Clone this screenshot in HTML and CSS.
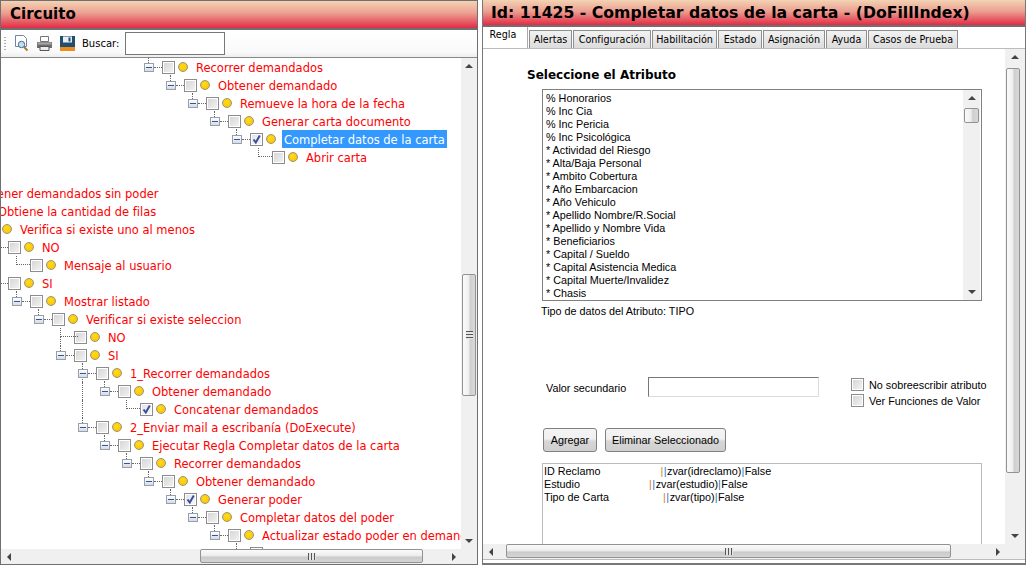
FILE: index.html
```html
<!DOCTYPE html>
<html lang="es">
<head>
<meta charset="utf-8">
<title>Circuito</title>
<link rel="stylesheet" href="styles.css">
</head>
<body>
<div class="app">
  <section class="panel left">
    <h1 class="title">Circuito</h1>
    <div class="toolbar">
      <span class="grip"></span>
      <svg class="tool first" width="17" height="17" viewBox="0 0 17 17"><path d="M2.5 .5h8l3 3v8h-11z" fill="#fff" stroke="#6d86a8"/><circle cx="8.5" cy="9.5" r="3.2" fill="#bfe0f5" stroke="#46688c"/><path d="M11 12l3.5 3.5" stroke="#a87a2c" stroke-width="2"/></svg>
      <svg class="tool" width="17" height="17" viewBox="0 0 17 17"><path d="M4.5 1.5h8v5h-8z" fill="#fff" stroke="#777"/><path d="M1 7h15v6H1z" fill="#6f6f6f"/><path d="M1.5 7.5h14v2h-14z" fill="#a8a8a8"/><path d="M4 11.5h9v4H4z" fill="#eee" stroke="#555"/></svg>
      <svg class="tool" width="17" height="17" viewBox="0 0 17 17"><path d="M1 1h15v15H1z" fill="#1f4e6e"/><path d="M4 1.5h9v6H4z" fill="#e8eef2"/><path d="M9.5 2.5h2v4h-2z" fill="#1f4e6e"/><path d="M1 12h15v4H1z" fill="#ef8a1d"/></svg>
      <label class="search-label">Buscar:</label>
      <input class="search" type="text">
    </div>
    <div class="scroller tree-scroller">
      <div class="tree">
        <div class="row" style="--l:8"><i class="exp stub"></i><i class="dots"></i><i class="cb"></i><i class="bullet"></i><span class="node">Recorrer demandados</span></div>
        <div class="row" style="--l:9"><i class="exp stub"></i><i class="dots"></i><i class="cb"></i><i class="bullet"></i><span class="node">Obtener demandado</span></div>
        <div class="row" style="--l:10"><i class="exp stub"></i><i class="dots"></i><i class="cb"></i><i class="bullet"></i><span class="node">Remueve la hora de la fecha</span></div>
        <div class="row" style="--l:11"><i class="exp stub"></i><i class="dots"></i><i class="cb"></i><i class="bullet"></i><span class="node">Generar carta documento</span></div>
        <div class="row" style="--l:12"><i class="exp stub"></i><i class="dots"></i><i class="cb on"><svg viewBox="0 0 11 11" width="11" height="11"><path d="M2.5 5.5l2.3 3L8.8 1.5" fill="none" stroke="#3c4f96" stroke-width="2"/></svg></i><i class="bullet"></i><span class="node sel">Completar datos de la carta</span></div>
        <div class="row" style="--l:13"><i class="leaf"></i><i class="dots none"></i><i class="cb"></i><i class="bullet"></i><span class="node">Abrir carta</span></div>
        <div class="row"></div>
        <div class="row" style="--l:-2"><i class="exp stub"></i><i class="dots"></i><i class="cb"></i><i class="bullet"></i><span class="node">Obtener demandados sin poder</span></div>
        <div class="row" style="--l:-1"><i class="exp stub"></i><i class="dots"></i><i class="cb"></i><i class="bullet"></i><span class="node">Obtiene la cantidad de filas</span></div>
        <div class="row" style="--l:0"><i class="exp stub"></i><i class="dots"></i><i class="cb"></i><i class="bullet"></i><span class="node">Verifica si existe uno al menos</span></div>
        <div class="row" style="--l:1"><i class="exp stub"></i><i class="dots"></i><i class="cb"></i><i class="bullet"></i><span class="node">NO</span></div>
        <div class="row" style="--l:2"><i class="leaf"></i><i class="dots none"></i><i class="cb"></i><i class="bullet"></i><span class="node">Mensaje al usuario</span></div>
        <div class="row" style="--l:1"><i class="exp stub"></i><i class="dots"></i><i class="cb"></i><i class="bullet"></i><span class="node">SI</span></div>
        <div class="row" style="--l:2"><i class="exp stub"></i><i class="dots"></i><i class="cb"></i><i class="bullet"></i><span class="node">Mostrar listado</span></div>
        <div class="row" style="--l:3"><i class="exp stub"></i><i class="dots"></i><i class="cb"></i><i class="bullet"></i><span class="node">Verificar si existe seleccion</span></div>
        <div class="row" style="--l:4"><i class="leaf cont"></i><i class="dots none"></i><i class="cb"></i><i class="bullet"></i><span class="node">NO</span></div>
        <div class="row" style="--l:4"><i class="exp stub"></i><i class="dots"></i><i class="cb"></i><i class="bullet"></i><span class="node">SI</span></div>
        <div class="row" style="--l:5"><i class="guide low" style="--g:5"></i><i class="exp stub"></i><i class="dots"></i><i class="cb"></i><i class="bullet"></i><span class="node">1_Recorrer demandados</span></div>
        <div class="row" style="--l:6"><i class="guide" style="--g:5"></i><i class="exp stub"></i><i class="dots"></i><i class="cb"></i><i class="bullet"></i><span class="node">Obtener demandado</span></div>
        <div class="row" style="--l:7"><i class="guide" style="--g:5"></i><i class="leaf"></i><i class="dots none"></i><i class="cb on"><svg viewBox="0 0 11 11" width="11" height="11"><path d="M2.5 5.5l2.3 3L8.8 1.5" fill="none" stroke="#3c4f96" stroke-width="2"/></svg></i><i class="bullet"></i><span class="node">Concatenar demandados</span></div>
        <div class="row" style="--l:5"><i class="exp stub"></i><i class="dots"></i><i class="cb"></i><i class="bullet"></i><span class="node">2_Enviar mail a escribanía (DoExecute)</span></div>
        <div class="row" style="--l:6"><i class="exp stub"></i><i class="dots"></i><i class="cb"></i><i class="bullet"></i><span class="node">Ejecutar Regla Completar datos de la carta</span></div>
        <div class="row" style="--l:7"><i class="exp stub"></i><i class="dots"></i><i class="cb"></i><i class="bullet"></i><span class="node">Recorrer demandados</span></div>
        <div class="row" style="--l:8"><i class="exp stub"></i><i class="dots"></i><i class="cb"></i><i class="bullet"></i><span class="node">Obtener demandado</span></div>
        <div class="row" style="--l:9"><i class="exp stub"></i><i class="dots"></i><i class="cb on"><svg viewBox="0 0 11 11" width="11" height="11"><path d="M2.5 5.5l2.3 3L8.8 1.5" fill="none" stroke="#3c4f96" stroke-width="2"/></svg></i><i class="bullet"></i><span class="node">Generar poder</span></div>
        <div class="row" style="--l:10"><i class="exp stub"></i><i class="dots"></i><i class="cb"></i><i class="bullet"></i><span class="node">Completar datos del poder</span></div>
        <div class="row" style="--l:11"><i class="exp stub"></i><i class="dots"></i><i class="cb"></i><i class="bullet"></i><span class="node">Actualizar estado poder en demandados</span></div>
        <div class="row" style="--l:12"><i class="exp stub"></i><i class="dots"></i><i class="cb"></i></div>
      </div>
      <div class="vbar">
        <span class="arrow up"></span>
        <div class="track tree-v"><span class="thumb v"><b></b></span></div>
        <span class="arrow down"></span>
      </div>
      <div class="hbar">
        <span class="arrow lft"></span>
        <div class="track tree-h"><span class="thumb h"><b></b></span></div>
        <span class="arrow rgt"></span>
      </div>
      <div class="corner"></div>
    </div>
  </section>

  <section class="panel right">
    <h1 class="title id">Id: 11425 - Completar datos de la carta - (DoFillIndex)</h1>
    <nav class="tabs">
      <a class="tab active">Regla</a>
      <a class="tab">Alertas</a>
      <a class="tab">Configuración</a>
      <a class="tab">Habilitación</a>
      <a class="tab">Estado</a>
      <a class="tab">Asignación</a>
      <a class="tab">Ayuda</a>
      <a class="tab">Casos de Prueba</a>
    </nav>
    <div class="scroller page-scroller">
      <div class="page">
        <h2 class="heading">Seleccione el Atributo</h2>
        <div class="listbox">
          <ul class="items">
            <li>% Honorarios</li>
            <li>% Inc Cia</li>
            <li>% Inc Pericia</li>
            <li>% Inc Psicológica</li>
            <li>* Actividad del Riesgo</li>
            <li>* Alta/Baja Personal</li>
            <li>* Ambito Cobertura</li>
            <li>* Año Embarcacion</li>
            <li>* Año Vehiculo</li>
            <li>* Apellido Nombre/R.Social</li>
            <li>* Apellido y Nombre Vida</li>
            <li>* Beneficiarios</li>
            <li>* Capital / Sueldo</li>
            <li>* Capital Asistencia Medica</li>
            <li>* Capital Muerte/Invalidez</li>
            <li>* Chasis</li>
          </ul>
          <div class="vbar list-bar">
            <span class="arrow up"></span>
            <div class="track list-v"><span class="thumb list-thumb"></span></div>
            <span class="arrow down"></span>
          </div>
        </div>
        <p class="type">Tipo de datos del Atributo: TIPO</p>
        <div class="value-row">
          <label class="value-label">Valor secundario</label>
          <input class="value-input" type="text">
          <div class="options">
            <label class="option"><i class="cb plain"></i>No sobreescribir atributo</label>
            <label class="option"><i class="cb plain"></i>Ver Funciones de Valor</label>
          </div>
        </div>
        <div class="actions">
          <button class="btn add">Agregar</button>
          <button class="btn del">Eliminar Seleccionado</button>
        </div>
        <div class="results">
          <div class="line">ID Reclamo                    <em class="o">|</em><em>|</em>zvar(idreclamo)<em>|</em>False</div>
          <div class="line">Estudio                       <em class="o">|</em><em>|</em>zvar(estudio)<em>|</em>False</div>
          <div class="line">Tipo de Carta                  <em class="o">|</em><em>|</em>zvar(tipo)<em>|</em>False</div>
        </div>
      </div>
      <div class="vbar">
        <span class="arrow up"></span>
        <div class="track page-v"><span class="thumb v"></span></div>
        <span class="arrow down"></span>
      </div>
      <div class="hbar">
        <span class="arrow lft"></span>
        <div class="track page-h"><span class="thumb h"><b></b></span></div>
        <span class="arrow rgt"></span>
      </div>
      <div class="corner"></div>
    </div>
  </section>
</div>
</body>
</html>
```

FILE: styles.css
```css
* { box-sizing: border-box; }
html, body { margin: 0; height: 100%; overflow: hidden; background: #fff; }
body { font-family: "Liberation Sans", Arial, sans-serif; font-size: 10.8px; color: #000; }
.app { display: flex; justify-content: space-between; width: 1026px; height: 565px; }

.panel { display: flex; flex-direction: column; background: #fff; border: 1px solid #6f6f6f; min-width: 0; }
.left { width: 478px; }
.right { width: 544px; border-width: 0 1px 2px 1px; border-color: #777; padding-bottom: 3px; }

.title {
  margin: 0; height: 29px; padding-left: 9px; flex: none;
  font: bold 15px/27px "DejaVu Sans", Verdana, sans-serif; color: #000;
  background: linear-gradient(#f3d3b4 0%, #ec9f90 45%, #e22b45 100%);
  border-bottom: 2px solid #6f6f6f;
}
.title.id { height: 27px; padding-left: 8px; line-height: 25px; font-size: 15.7px; }

.toolbar {
  flex: none; display: flex; align-items: center; height: 28px;
  background: linear-gradient(#fff 0%, #fafafa 80%, #eee 100%);
  border-bottom: 1px solid #888;
}
.grip { width: 2px; height: 14px; margin-left: 3px; background: repeating-linear-gradient(#aaa 0 1px, transparent 1px 3px); }
.tool { margin-left: 6px; }
.tool.first { margin-left: 7px; }
.search-label { margin-left: 6px; font-family: "DejaVu Sans", sans-serif; font-size: 10px; }
.search { width: 100px; height: 23px; margin-left: 6px; border: 1px solid #777; background: #fff; padding: 0; outline: 0; }

.scroller { flex: 1; min-height: 0; display: grid; grid-template-rows: 1fr auto; }
.tree-scroller { grid-template-columns: 460px 16px; }
.page-scroller { grid-template-columns: 522px 20px; border: 1px solid #bbb; border-width: 1px 0 1px 0; }

.tree { overflow: hidden; font: 11.5px/20px "DejaVu Sans", Verdana, sans-serif; color: #f00; min-width: 0; min-height: 0; }
.row {
  --l: 0;
  position: relative; display: flex; align-items: center; height: 18px;
  margin-left: calc(var(--l) * 22px - 33px); white-space: nowrap;
}
.row i { flex: none; display: block; }
.exp {
  position: relative; width: 10px; height: 9px; margin-top: 1px;
  border: 1px solid #97a0aa; background: linear-gradient(#fff, #d6dbe2);
}
.exp::after { content: ""; position: absolute; left: 1px; right: 1px; top: 3px; height: 1px; background: #2f55a8; }
.exp.stub::before { content: ""; position: absolute; left: 3px; top: -7px; height: 6px; border-left: 1px dotted #666; }
.row .guide {
  position: absolute; top: 0; height: 18px; border-left: 1px dotted #666;
  left: calc((var(--g) - var(--l)) * 22px + 4px);
}
.row .guide.low { top: 13px; height: 5px; }
.dots { width: 8px; height: 1px; border-top: 1px dotted #666; }
.dots.none { width: 0; border: 0; }
.leaf { width: 18px; height: 9px; margin-top: -9px; border-left: 1px dotted #666; border-bottom: 1px dotted #666; margin-left: 4px; margin-right: -4px; }
.leaf.cont { position: relative; }
.leaf.cont::after { content: ""; position: absolute; left: -1px; top: 9px; height: 9px; border-left: 1px dotted #666; }
.cb {
  display: block; flex: none; width: 13px; height: 13px; border: 1px solid #8c8c8c;
  background: linear-gradient(135deg, #d4d4d4, #f4f4f4); box-shadow: inset 0 0 0 1px #fff;
}
.cb.on { background: linear-gradient(135deg, #dfe3ee, #f8f8fb); }
.cb svg { display: block; }
.bullet {
  width: 10px; height: 10px; margin: 0 8px 0 3px; border-radius: 50%;
  background: radial-gradient(circle at 45% 40%, #ffdc1e, #ffc600 70%); border: 1px solid #97947c;
}
.node { display: block; height: 18px; }
.node.sel { background: #3399ff; color: #fff; margin-left: -2px; padding: 0 2px; }

.track { flex: 1; min-width: 0; min-height: 0; display: flex; }
.vbar { display: flex; flex-direction: column; background: #f0f0f0; min-height: 0; }
.hbar { display: flex; background: #f0f0f0; height: 15px; min-width: 0; }
.corner { background: #f0f0f0; }
.arrow { flex: none; position: relative; display: block; }
.vbar .arrow { height: 16px; }
.hbar .arrow { width: 15px; }
.arrow::after { content: ""; position: absolute; left: 50%; top: 50%; width: 0; height: 0; border: 4px solid transparent; }
.arrow.up::after { margin: -2px 0 0 -4px; border-bottom-color: #444; border-top-width: 0; }
.arrow.down::after { margin: -2px 0 0 -4px; border-top-color: #444; border-bottom-width: 0; }
.arrow.lft::after { margin: -4px 0 0 -2px; border-right-color: #444; border-left-width: 0; }
.arrow.rgt::after { margin: -4px 0 0 -2px; border-left-color: #444; border-right-width: 0; }

.thumb { display: flex; align-items: center; justify-content: center; flex: none; border: 1px solid #929292; border-radius: 2px; }
.thumb b { display: block; }
.thumb.v { background: linear-gradient(90deg, #fafafa, #f0f0f0 45%, #cfcfcf 60%, #d8d8d8); width: 14px; margin-left: 1px; }
.thumb.v b { width: 7px; height: 8px; background: repeating-linear-gradient(#555 0 1px, #e6e6e6 1px 3px); }
.thumb.h { background: linear-gradient(#fafafa, #eee 45%, #cbcbcb 60%, #d4d4d4); height: 14px; }
.thumb.h b { width: 8px; height: 7px; background: repeating-linear-gradient(90deg, #555 0 1px, #e6e6e6 1px 3px); }
.tree-v { padding-top: 200px; }
.tree-v .thumb { height: 122px; }
.tree-h { padding-left: 184px; }
.tree-h .thumb { width: 223px; }

.tabs { flex: none; display: flex; height: 21px; padding: 3px 0 0 0; gap: 1px; align-items: stretch; }
.tab {
  display: flex; align-items: center; justify-content: center; height: 18px;
  background: linear-gradient(#f2f2f2, #dcdcdc); border: 1px solid #8f8f8f; border-bottom: 0;
  font: 9.6px "DejaVu Sans", sans-serif; color: #000;
}
.tab:nth-child(2) { width: 43px; }
.tab:nth-child(3) { width: 78px; }
.tab:nth-child(4) { width: 65px; }
.tab:nth-child(5) { width: 44px; }
.tab:nth-child(6) { width: 62px; }
.tab:nth-child(7) { width: 41px; }
.tab:nth-child(8) { width: 90px; }
.tab.active { width: 45px; height: 21px; margin-top: -3px; margin-bottom: -1px; background: #fff; border-color: #aaa; border-left: 0; border-top: 0; align-items: flex-start; padding: 2px 4px 0 0; z-index: 1; position: relative; }

.page { min-width: 0; min-height: 0; overflow: hidden; padding-left: 44px; }
.heading { margin: 19px 0 0 0; font: bold 12px/15px "DejaVu Sans", Verdana, sans-serif; color: #000; }
.listbox { display: flex; width: 440px; height: 212px; margin: 6px 0 0 15px; border: 1px solid #808080; }
.items { flex: 1; margin: 0; padding: 2px 0 0 3px; list-style: none; line-height: 13px; min-width: 0; overflow: hidden; }
.list-bar { width: 17px; flex: none; margin-right: 1px; }
.list-v { padding-top: 2px; }
.list-thumb { width: 15px; height: 15px; margin-left: 1px; background: linear-gradient(90deg, #fafafa, #eee 45%, #cfcfcf 60%, #d8d8d8); }
.type { margin: 4px 0 0 14px; line-height: 13px; }
.value-row { display: flex; margin: 59px 0 0 0; height: 34px; }
.value-label { margin: 4px 0 0 19px; width: 102px; line-height: 15px; }
.value-input { width: 171px; height: 20px; padding: 0; border: 1px solid #dcdcdc; border-top-color: #777; border-left-color: #777; background: #fff; }
.options { margin-left: 32px; display: flex; flex-direction: column; gap: 3px; margin-top: 1px; }
.option { display: flex; align-items: center; height: 13px; white-space: nowrap; }
.option .cb { margin-right: 5px; }
.actions { display: flex; gap: 8px; margin: 17px 0 0 16px; }
.btn { height: 24px; padding: 0; border: 1px solid #808080; border-radius: 3px; background: linear-gradient(#f4f4f4, #f0f0f0 45%, #d6d6d6 55%, #cfcfcf); font: 10.8px "Liberation Sans", Arial, sans-serif; color: #000; }
.btn.add { width: 54px; }
.btn.del { width: 121px; }
.results { width: 440px; height: 90px; margin: 11px 0 0 15px; padding: 1px 2px 1px 1px; border: 1px solid #bbb; border-bottom: 0; line-height: 13px; }
.line { white-space: pre; }
.line em { font-style: normal; color: #1f78c8; padding-right: .5px; }
.line em.o { color: #d9801f; }
.page-v { padding-top: 3px; }
.page-v .thumb { height: 405px; }
.page-h { padding-left: 8px; }
.page-h .thumb { width: 445px; }
```
